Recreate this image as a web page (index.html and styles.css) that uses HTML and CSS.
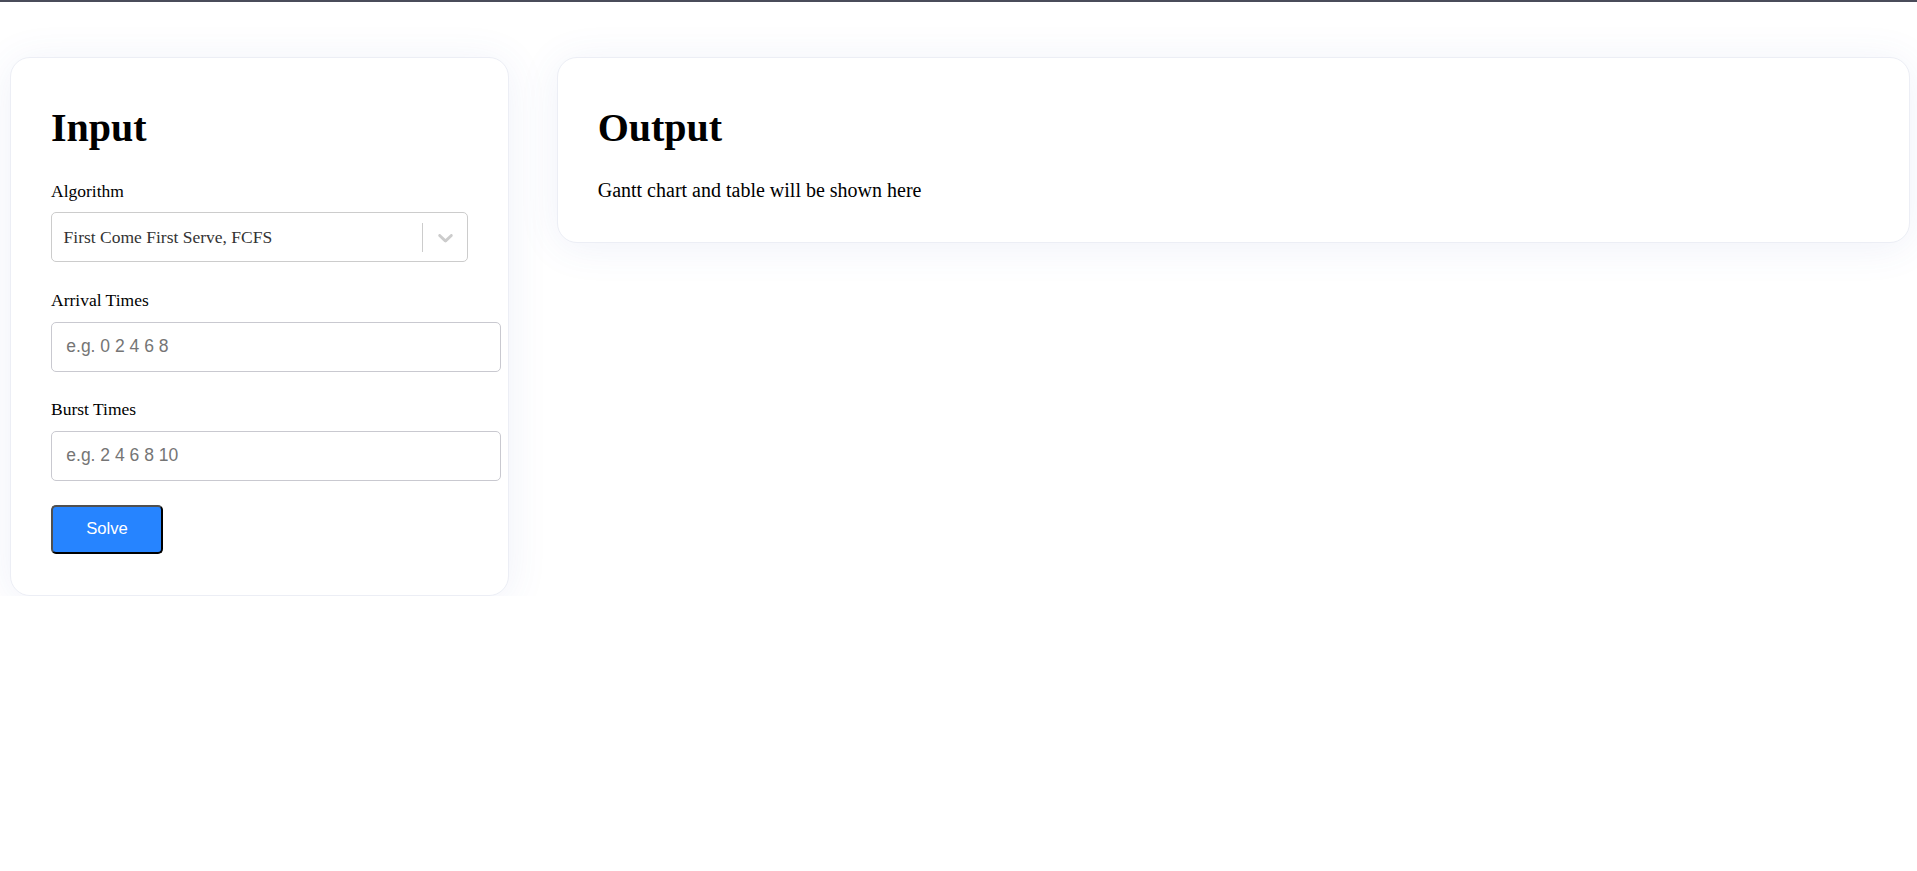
FILE: index.html
```html
<!DOCTYPE html>
<html lang="en">
<head>
<meta charset="utf-8">
<title>CPU Scheduling</title>
<link rel="stylesheet" href="styles.css">
</head>
<body>
<div class="app">
  <section class="card card-input">
    <h1>Input</h1>
    <form class="form">
      <div class="field">
        <label>Algorithm</label>
        <div class="select">
          <div class="select-value">First Come First Serve, FCFS</div>
          <span class="select-sep"></span>
          <div class="select-indicator">
            <svg width="25" height="25" viewBox="0 0 20 20" aria-hidden="true"><path fill="currentColor" d="M4.516 7.548c0.436-0.446 1.043-0.481 1.576 0l3.908 3.747 3.908-3.747c0.533-0.481 1.141-0.446 1.574 0 0.436 0.445 0.408 1.197 0 1.615-0.406 0.418-4.695 4.502-4.695 4.502-0.217 0.223-0.502 0.335-0.787 0.335s-0.57-0.112-0.789-0.335c0 0-4.287-4.084-4.695-4.502s-0.436-1.17 0-1.615z"></path></svg>
          </div>
        </div>
      </div>
      <div class="field">
        <label>Arrival Times</label>
        <input class="text-input" type="text" placeholder="e.g. 0 2 4 6 8">
      </div>
      <div class="field field-last">
        <label>Burst Times</label>
        <input class="text-input" type="text" placeholder="e.g. 2 4 6 8 10">
      </div>
      <button class="solve" type="button">Solve</button>
    </form>
  </section>
  <section class="card card-output">
    <h1>Output</h1>
    <p class="output-text">Gantt chart and table will be shown here</p>
  </section>
</div>
</body>
</html>
```
FILE: styles.css
```css
html, body {
  background: #ffffff;
}

body {
  margin: 0;
  border-top: 2px solid #4a4c5a;
  font-family: "Liberation Serif", "Times New Roman", serif;
  color: #000;
}

.app {
  display: flex;
  align-items: flex-start;
  gap: 47.4px;
  padding: 55.3px 7px 0 10px;
}

.card {
  background: #ffffff;
  border: 1px solid #eceef5;
  border-radius: 20px;
  box-shadow: 0 4px 42px rgba(70, 90, 190, 0.085);
  padding: 20px 40px;
  box-sizing: border-box;
}

.card-input {
  flex: none;
  width: 499.3px;
}

.card-output {
  flex: 1;
}

.card h1 {
  font-size: 40px;
  font-weight: bold;
  line-height: 46px;
  margin: 26.8px 0;
}

.output-text {
  font-size: 20px;
  line-height: 24px;
  margin: 20px 0 20.6px;
}

.form {
  padding-top: 2.8px;
  margin: 0;
}

.field {
  margin-bottom: 27.7px;
}

.field-last {
  margin-bottom: 24.1px;
}

.field label {
  display: block;
  font-size: 17.5px;
  line-height: 20px;
  margin-bottom: 11.6px;
}

.select {
  display: flex;
  align-items: center;
  height: 50px;
  box-sizing: border-box;
  border: 1px solid #cccccc;
  border-radius: 5px;
  background: #fff;
}

.select-value {
  flex: 1;
  padding-left: 11.6px;
  font-size: 17.5px;
  line-height: 20px;
  color: #333333;
  white-space: nowrap;
}

.select-sep {
  align-self: stretch;
  width: 1px;
  margin: 9.5px 0;
  background: #cccccc;
}

.select-indicator {
  display: flex;
  align-items: center;
  padding: 0 9.5px;
  color: #cccccc;
}

.text-input {
  display: block;
  width: 450px;
  height: 50px;
  box-sizing: border-box;
  border: 1px solid #c9c9d0;
  border-radius: 5px;
  padding: 0 14.3px;
  margin: 0;
  font-family: "Liberation Sans", Arial, sans-serif;
  font-size: 17.5px;
  color: #000;
  background: #fff;
  outline: none;
}

.text-input::placeholder {
  color: #757575;
}

.solve {
  display: block;
  width: 112px;
  height: 49px;
  margin: 0 0 21px;
  padding: 0;
  background: #2684ff;
  color: #ffffff;
  border: 2px solid;
  border-color: #505050 #000000 #000000 #505050;
  border-radius: 5px;
  font-family: "Liberation Sans", Arial, sans-serif;
  font-size: 16.67px;
}
```
